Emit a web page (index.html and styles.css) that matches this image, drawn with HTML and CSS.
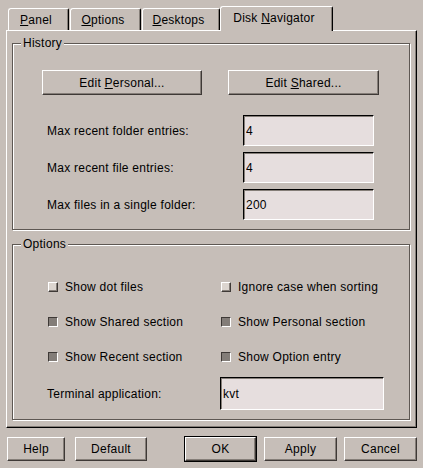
FILE: index.html
```html
<!DOCTYPE html>
<html>
<head>
  <meta charset="UTF-8">
  <title>Disk Navigator</title>
  <link rel="stylesheet" href="styles.css">
</head>
<body>
  <div class="dialog">
    <div class="tabs">
      <div class="tab tab-panel"><span><u>P</u>anel</span></div>
      <div class="tab tab-options"><span><u>O</u>ptions</span></div>
      <div class="tab tab-desktops"><span><u>D</u>esktops</span></div>
      <div class="tab tab-disknav active"><span>Disk <u>N</u>avigator</span></div>
    </div>

    <div class="panel">
      <div class="group history">
        <span class="group-title">History</span>
        <div class="buttons-row">
          <button class="btn edit-personal">Edit <u>P</u>ersonal...</button>
          <button class="btn edit-shared">Edit <u>S</u>hared...</button>
        </div>
        <div class="fields">
          <label>Max recent folder entries:</label>
          <input type="text" class="field-input" value="4">
          <label>Max recent file entries:</label>
          <input type="text" class="field-input" value="4">
          <label>Max files in a single folder:</label>
          <input type="text" class="field-input" value="200">
        </div>
      </div>

      <div class="group options">
        <span class="group-title">Options</span>
        <div class="checks">
          <div class="check-item"><span class="check"></span>Show dot files</div>
          <div class="check-item"><span class="check"></span>Ignore case when sorting</div>
          <div class="check-item"><span class="check on"></span>Show Shared section</div>
          <div class="check-item"><span class="check on"></span>Show Personal section</div>
          <div class="check-item"><span class="check on"></span>Show Recent section</div>
          <div class="check-item"><span class="check on"></span>Show Option entry</div>
        </div>
        <div class="terminal-row">
          <label class="terminal-label">Terminal application:</label>
          <input type="text" class="field-input terminal-input" value="kvt">
        </div>
      </div>
    </div>

    <div class="footer">
      <div class="footer-left">
        <button class="btn btn-help">Help</button>
        <button class="btn btn-default">Default</button>
      </div>
      <div class="footer-right">
        <div class="ok-frame"><button class="btn btn-ok">OK</button></div>
        <button class="btn btn-apply">Apply</button>
        <button class="btn btn-cancel">Cancel</button>
      </div>
    </div>
  </div>
</body>
</html>
```

FILE: styles.css
```css
body {
  margin: 0;
  background-color: #c6beb8;
  font-family: "Liberation Sans", Arial, sans-serif;
  font-size: 12px;
  letter-spacing: 0.25px;
  color: #000;
}
.dialog {
  width: 423px;
  height: 468px;
}
u {
  text-decoration: underline;
  text-underline-offset: 1px;
}

/* tabs */
.tabs {
  display: flex;
  align-items: flex-end;
  gap: 1px;
  height: 30px;
  padding-left: 8px;
  box-sizing: border-box;
}
.tab {
  height: 22px;
  box-sizing: border-box;
  border-top: 1px solid #fff;
  border-left: 1px solid #fff;
  border-right: 1px solid #000;
  border-top-left-radius: 3px;
  border-top-right-radius: 2px;
  box-shadow: inset -1px 0 #857e78;
  display: flex;
  align-items: center;
  justify-content: center;
  padding-right: 5px;
  white-space: nowrap;
}
.tab-panel { width: 61px; }
.tab-options { width: 71px; }
.tab-desktops { width: 78px; }
.tab-disknav { width: 113px; }
.tab.active {
  height: 25px;
  margin-bottom: -1px;
  margin-left: -1px;
  padding-bottom: 2px;
  background-color: #c6beb8;
  position: relative;
  z-index: 1;
}

/* main panel */
.panel {
  margin-left: 6px;
  width: 411px;
  height: 398px;
  box-sizing: border-box;
  border-top: 1px solid #fff;
  border-left: 1px solid #fff;
  border-right: 1px solid #000;
  border-bottom: 1px solid #000;
  box-shadow: inset -1px -1px #857e78;
  padding: 12px 0 0 5px;
}
.group {
  position: relative;
  width: 398px;
  box-sizing: border-box;
  border: 1px solid #5e5853;
  box-shadow: inset 1px 1px #fff, 1px 1px #fff;
}
.group-title {
  position: absolute;
  top: -8px;
  left: 8px;
  padding: 0 2px;
  line-height: 14px;
  background-color: #c6beb8;
}
.history {
  height: 187px;
  padding: 26px 0 0 29px;
  margin-bottom: 14px;
}
.options {
  height: 176px;
  padding: 32px 0 0 34px;
}

/* buttons */
.btn {
  height: 25px;
  box-sizing: border-box;
  background-color: #c6beb8;
  border: 1px solid;
  border-color: #fff #3e3936 #3e3936 #fff;
  box-shadow: inset -1px -1px #857e78;
  font: inherit;
  letter-spacing: inherit;
  color: #000;
  padding: 0;
}
.buttons-row {
  display: flex;
  gap: 26px;
}
.edit-personal { width: 160px; }
.edit-shared { width: 151px; }

/* text fields */
.fields {
  margin-top: 20px;
  padding-left: 5px;
  display: grid;
  grid-template-columns: 196px 131px;
  row-gap: 6px;
  align-items: center;
}
.field-input {
  width: 131px;
  height: 31px;
  box-sizing: border-box;
  background-color: #e6dede;
  border: 1px solid;
  border-color: #000 #fff #fff #000;
  box-shadow: inset 1px 1px #857e78;
  font: inherit;
  letter-spacing: inherit;
  color: #000;
  padding: 0 0 0 2px;
  margin: 0;
  outline: none;
}

/* check boxes */
.checks {
  display: grid;
  grid-template-columns: 173px 164px;
  grid-auto-rows: 20px;
  row-gap: 15px;
}
.check-item {
  display: flex;
  align-items: center;
  gap: 7px;
  white-space: nowrap;
}
.check {
  width: 10px;
  height: 10px;
  margin-left: 1px;
  box-sizing: border-box;
  background-color: #dcd5cf;
  border: 1px solid;
  border-color: #fff #3e3936 #3e3936 #fff;
  box-shadow: inset -1px -1px #857e78;
}
.check.on {
  background-color: #837d78;
  border-color: #3e3936 #fff #fff #3e3936;
  box-shadow: none;
}
.terminal-row {
  display: flex;
  align-items: center;
  margin-top: 10px;
}
.terminal-label {
  width: 173px;
}
.terminal-input {
  width: 164px;
  height: 33px;
}

/* dialog buttons */
.footer {
  display: flex;
  justify-content: space-between;
  align-items: center;
  height: 26px;
  margin-top: 8px;
  padding: 0 6px 0 7px;
}
.footer-left,
.footer-right {
  display: flex;
  align-items: center;
}
.footer-left { gap: 10px; }
.footer-right { gap: 7px; }
.footer .btn { height: 24px; }
.btn-help { width: 58px; }
.btn-default { width: 72px; }
.btn-apply { width: 73px; }
.btn-cancel { width: 73px; }
.ok-frame {
  border: 1px solid #000;
}
.btn-ok { width: 71px; }
```
